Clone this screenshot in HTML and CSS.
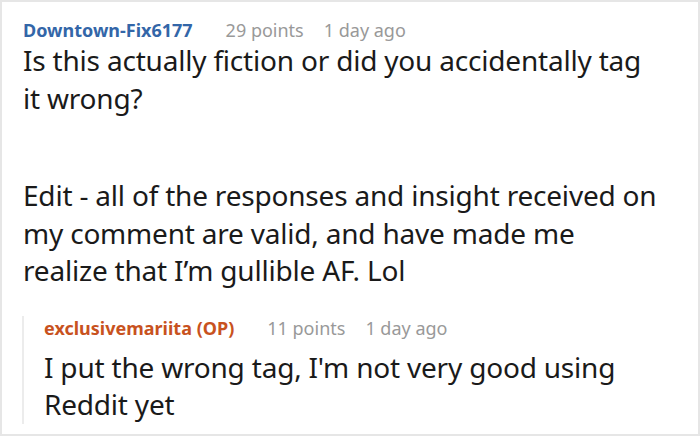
FILE: index.html
```html
<!DOCTYPE html>
<html lang="en">
<head>
    <meta charset="UTF-8">
    <title>Comment</title>
    <link rel="stylesheet" href="styles.css">
</head>
<body>

<div class="card">
    <div class="comment">
        <div class="meta">
            <span class="author">Downtown-Fix6177</span>
            <span class="info">29 points</span>
            <span class="info">1 day ago</span>
        </div>
        <div class="text">
            <p>Is this actually fiction or did you accidentally tag it wrong?</p>
            <p>Edit - all of the responses and insight received on my comment are valid, and have made me realize that I’m gullible AF. Lol</p>
        </div>

        <div class="reply">
            <div class="meta">
                <span class="author op">exclusivemariita (OP)</span>
                <span class="info">11 points</span>
                <span class="info">1 day ago</span>
            </div>
            <div class="text">
                <p>I put the wrong tag, I'm not very good using Reddit yet</p>
            </div>
        </div>
    </div>
</div>

</body>
</html>
```

FILE: styles.css
```css
body {
    margin: 0;
    font-family: "Noto Sans", sans-serif;
    background-color: #fff;
}
.card {
    width: 700px;
    height: 436px;
    box-sizing: border-box;
    border: 2px solid #e6e6e6;
    padding: 16px 36px 0 21px;
    overflow: hidden;
}
.meta {
    display: flex;
    gap: 20px;
    font-size: 18px;
    line-height: 24px;
}
.author {
    color: #3366a8;
    font-weight: bold;
    margin-right: 13px;
}
.author.op {
    color: #c8521e;
}
.info {
    color: #999;
}
.text {
    font-size: 28px;
    line-height: 37.5px;
    color: #1a1a1a;
    letter-spacing: -0.2px;
}
.text p {
    margin: 0 0 60px;
}
.comment > .text p:last-child {
    margin-bottom: 26px;
}
.reply {
    margin-left: -1px;
    border-left: 2px solid #ececec;
    padding-left: 20px;
}
.reply .meta {
    margin-bottom: 9px;
}
.reply .text p {
    margin: 0;
}
```
